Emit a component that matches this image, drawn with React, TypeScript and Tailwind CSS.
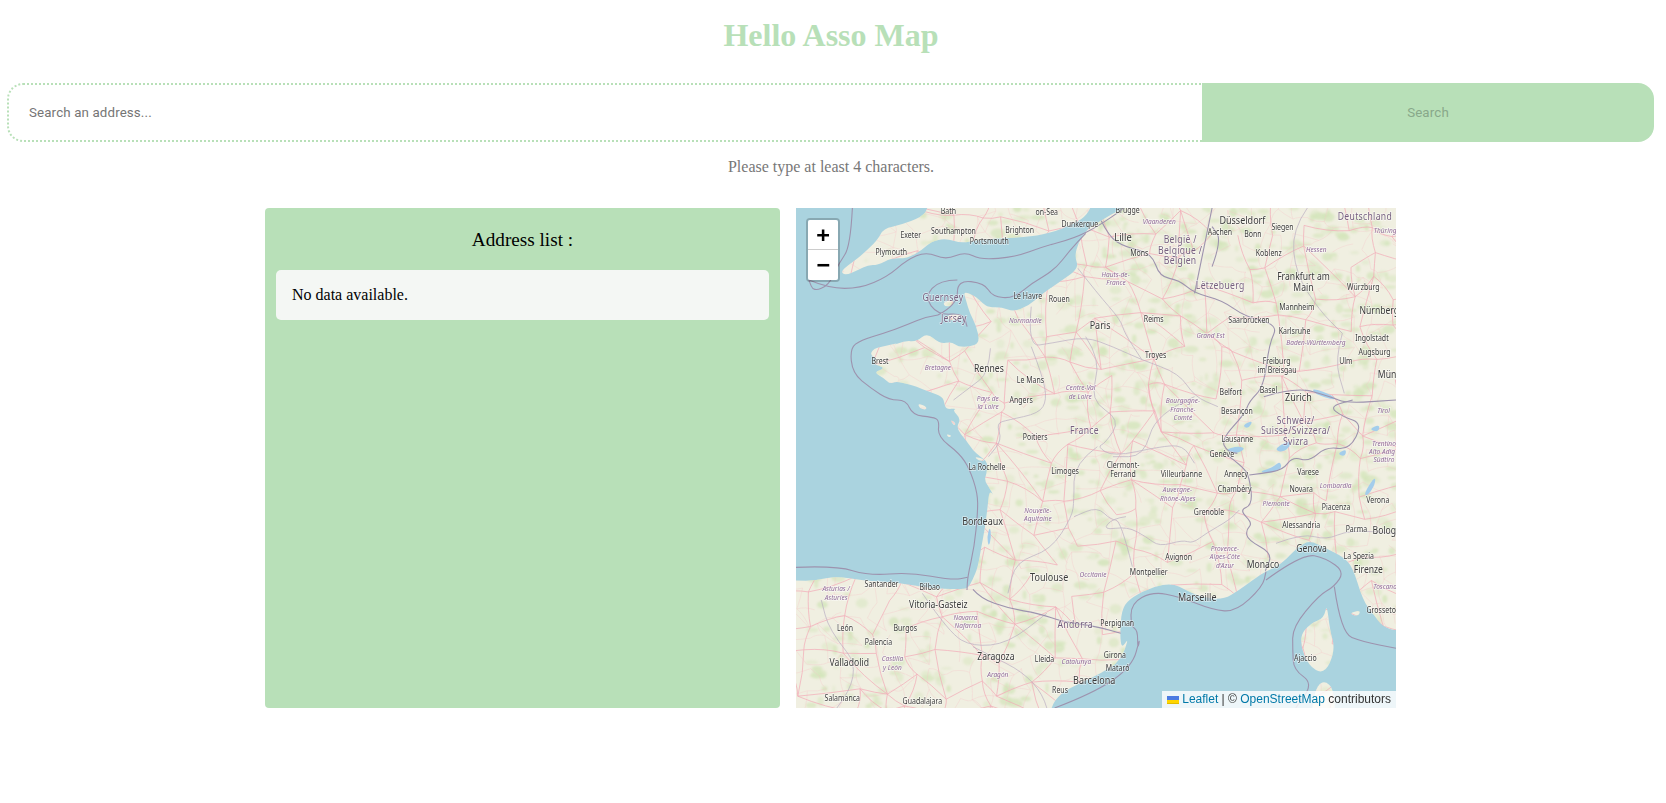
import { useMemo } from "react";

type Pt = [number, number];
type Label = { t: string; x: number; y: number; size?: number };

// labels and northern shapes were read off a zoomed crop of the whole map
const toX = (x: number) => ((x - 15) * 600) / 1543;
const toY = (y: number) => (y - 24) / 3;

// same space, from the two closer crops of the west coast and the riviera
const west = (x: number, y: number): Pt => [(x / 3) * (1543 / 600) + 15, (y / 3 + 132) * 3 + 24];
const east = (x: number, y: number): Pt => [(x / 3 + 300) * (1543 / 600) + 15, (y / 3 + 192) * 3 + 24];
const W = (pts: number[][]) => pts.map(([x, y]) => west(x, y));
const E = (pts: number[][]) => pts.map(([x, y]) => east(x, y));

const line = (pts: Pt[], closed = true) => {
  const p = pts.map(([x, y]) => [toX(x), toY(y)] as Pt);
  const mid = (a: Pt, b: Pt) => `${(a[0] + b[0]) / 2} ${(a[1] + b[1]) / 2}`;
  if (closed) {
    let d = `M${mid(p[p.length - 1], p[0])}`;
    p.forEach((q, i) => {
      d += ` Q${q[0]} ${q[1]} ${mid(q, p[(i + 1) % p.length])}`;
    });
    return `${d} Z`;
  }
  let d = `M${p[0][0]} ${p[0][1]}`;
  for (let i = 1; i < p.length - 1; i++) {
    d += ` Q${p[i][0]} ${p[i][1]} ${mid(p[i], p[i + 1])}`;
  }
  const last = p[p.length - 1];
  return `${d} L${last[0]} ${last[1]}`;
};

const continent: Pt[] = [
  [885, -60], [860, 24], [830, 40], [800, 62], [765, 85], [740, 130], [732, 170], [742, 205], [700, 240], [650, 280],
  [612, 318], [575, 335], [545, 322], [510, 322], [495, 310], [478, 290], [445, 273], [452, 300], [462, 340],
  [478, 375], [488, 428], [462, 440], [432, 440], [415, 425], [385, 432], [352, 398], [325, 425], [295, 422],
  [255, 440],
  ...W([
    [310, 8], [270, 18], [232, 26], [222, 46], [245, 55], [228, 70], [270, 85], [232, 96], [265, 115], [282, 132],
    [300, 124], [335, 132], [360, 140], [400, 155], [440, 170], [445, 190], [450, 208], [482, 205], [470, 212],
    [495, 236], [480, 265], [510, 300], [530, 330], [552, 350], [575, 365], [572, 400], [565, 420], [582, 447],
    [600, 480], [626, 522], [596, 470], [580, 450], [575, 500], [566, 570], [556, 620], [546, 680], [530, 720],
    [515, 745], [490, 748], [400, 745], [300, 727], [200, 722], [120, 708], [60, 722], [0, 722],
  ]),
  [-150, 1135], [-150, 1700], [640, 1700], [668, 1524], [695, 1480], [740, 1452], [800, 1420], [850, 1382], [872, 1310],
  ...E([
    [75, 750], [72, 680], [80, 620], [110, 590], [170, 560], [230, 550], [270, 570], [310, 590], [380, 600],
    [430, 570], [470, 540], [500, 520], [560, 490], [600, 445], [640, 420], [690, 445], [740, 470], [770, 500],
    [800, 600], [830, 640], [860, 680], [900, 692],
  ]),
  [1750, 1320], [1750, -60],
];

const britain: Pt[] = [
  [360, -60], [355, 24], [340, 50], [285, 75], [240, 85], [225, 120], [180, 170], [150, 195], [130, 215], [142, 226],
  [175, 210], [200, 195], [225, 195], [260, 175], [300, 175], [340, 150], [362, 125], [400, 115], [440, 130],
  [480, 120], [540, 115], [620, 110], [680, 95], [705, 82], [750, 60], [775, 24], [790, -60],
];

const corsica: Pt[] = [
  [1380, 1210], [1388, 1290], [1402, 1350], [1374, 1425], [1330, 1395], [1308, 1312], [1338, 1270], [1373, 1255],
];
const sardinia: Pt[] = [[1335, 1640], [1345, 1480], [1370, 1438], [1402, 1470], [1400, 1640]];
const islands: Pt[][] = [
  [[392, 308], [415, 298], [424, 312], [400, 322]],
  [[402, 345], [442, 340], [440, 358], [408, 362]],
  W([[366, 190], [392, 200], [390, 210], [370, 204]]),
  W([[462, 238], [480, 250], [474, 258]]),
  W([[450, 282], [468, 287], [458, 293]]),
  W([[533, 348], [572, 360], [550, 364]]),
  E([[758, 640], [794, 630], [787, 650]]),
];

const borders: Pt[][] = [
  [[160, 24], [155, 140], [125, 190], [100, 255], [60, 275], [48, 240]],
  [[48, 240], [100, 265], [180, 265], [250, 230], [300, 180], [350, 155], [400, 180], [450, 155], [490, 180], [580, 170], [650, 140], [730, 115], [790, 80], [860, 24]],
  [[380, 345], [350, 350], [300, 375], [240, 400],
    ...W([[195, 0], [162, 25], [170, 100], [225, 145], [280, 180], [330, 180], [350, 225], [410, 232], [430, 240], [425, 290], [490, 340], [520, 385], [545, 460], [545, 520], [535, 620], [515, 710], [513, 750]])],
  W([[0, 682], [120, 677], [220, 707], [340, 697], [470, 720], [515, 712]]),
  [[380, 345], [430, 315], [430, 240], [500, 250], [520, 290], [575, 295], [620, 250], [680, 210], [720, 150], [760, 100]],
  [[430, 240], [385, 240], [345, 290], [380, 345], [445, 340], [455, 380]],
  [[800, 62], [820, 110], [860, 140], [930, 160], [950, 230], [1000, 240], [1040, 280], [1110, 300], [1170, 350], [1255, 375], [1232, 430], [1218, 560], [1180, 605], [1170, 640], [1108, 720], [1125, 755], [1150, 760]],
  E([[400, 170], [440, 200], [460, 230], [470, 315], [430, 330], [470, 370], [450, 390], [455, 420], [530, 460], [508, 512]]),
  E([[460, 225], [500, 220], [560, 210], [590, 170], [640, 185], [690, 140], [760, 150], [800, 70], [740, 50], [700, 20], [770, 0]]),
  [[1218, 590], [1300, 560], [1390, 590], [1430, 610], [1558, 600]],
  [[1040, 280], [1085, 24]],
  [[1085, 200], [1110, 120], [1085, 80]],
  [[470, 1168], [490, 1195], [560, 1225], [640, 1240], [700, 1265], [790, 1280], [850, 1300]],
  [[680, 1524], [780, 1480], [880, 1400], [900, 1310], ...E([[125, 750], [125, 690], [105, 680], [105, 610], [170, 575], [250, 590], [350, 630], [420, 635], [500, 560], [510, 515]])],
  [...E([[510, 540], [620, 460], [690, 475], [745, 515], [715, 560], [670, 585], [590, 680], [590, 750]]), [1295, 1410], [1345, 1450], [1300, 1524]],
  E([[715, 560], [735, 700], [800, 725], [900, 745]]),
];

const regions: Pt[][] = [
  [[620, 320], [610, 440], [670, 430], [760, 410], [830, 440], [905, 480], [1000, 520], [1040, 590], [1100, 620]],
  [[740, 205], [790, 280], [850, 360], [860, 400], [905, 480]],
  [[515, 445], [510, 520], [465, 560], [420, 600]],
  [[620, 440], [650, 530], [660, 600], [640, 640], [560, 660], [530, 670], [545, 720], [510, 770]],
  [[760, 410], [800, 480], [770, 600], [850, 660], [810, 730], [790, 740], [830, 770], [950, 740], [1010, 735], [1040, 790]],
  [[790, 740], [730, 790], [730, 900], [725, 950], [670, 1050], [580, 1085], [560, 1180]],
  [[880, 1100], [850, 960], [825, 960], [790, 920], [730, 950]],
  [[1040, 590], [940, 640], [910, 770], [830, 770]],
  E([[90, 350], [50, 355], [20, 390], [95, 380], [150, 410], [190, 440], [260, 420], [290, 430], [330, 400], [400, 360], [430, 330]]),
  [[120, 1524], [190, 1420], [100, 1290], [80, 1200]],
  [[340, 1180], [410, 1300], [470, 1340], [560, 1330], [660, 1240]],
  [[660, 1524], [640, 1440], [470, 1340]],
  [[1330, 24], [1290, 90], [1300, 220], [1360, 330], [1420, 400]],
  [[1420, 400], [1400, 480], [1425, 580]],
  E([[540, 430], [620, 400], [690, 420], [760, 390], [900, 400]]),
];

const cities: Label[] = [
  { t: "Bath", x: 407, y: 34 }, { t: "on-Sea", x: 660, y: 37 }, { t: "Brugge", x: 868, y: 30 },
  { t: "Exeter", x: 310, y: 104 }, { t: "Southampton", x: 420, y: 93 }, { t: "Brighton", x: 590, y: 89 },
  { t: "Portsmouth", x: 512, y: 124 }, { t: "Plymouth", x: 260, y: 157 }, { t: "Dunkerque", x: 745, y: 73 },
  { t: "Lille", x: 856, y: 113, size: 11.5 }, { t: "Mons", x: 898, y: 160 }, { t: "Aachen", x: 1105, y: 96 },
  { t: "Düsseldorf", x: 1163, y: 64, size: 11 }, { t: "Bonn", x: 1190, y: 101 }, { t: "Siegen", x: 1266, y: 81 },
  { t: "Koblenz", x: 1231, y: 160 }, { t: "Frankfurt am", x: 1320, y: 232, size: 10.5 }, { t: "Main", x: 1320, y: 265, size: 10.5 },
  { t: "Würzburg", x: 1474, y: 261 }, { t: "Mannheim", x: 1303, y: 322 }, { t: "Nürnberg", x: 1515, y: 332, size: 10.5 },
  { t: "Le Havre", x: 611, y: 289 }, { t: "Rouen", x: 692, y: 297 }, { t: "Reims", x: 935, y: 356 },
  { t: "Saarbrücken", x: 1180, y: 361 }, { t: "Karlsruhe", x: 1297, y: 393 }, { t: "Ingolstadt", x: 1496, y: 414 },
  { t: "Paris", x: 797, y: 378, size: 11 }, { t: "Brest", x: 231, y: 483 }, { t: "Rennes", x: 511, y: 508, size: 10.5 },
  { t: "Troyes", x: 940, y: 464 }, { t: "Augsburg", x: 1503, y: 455 }, { t: "Freiburg", x: 1251, y: 483 },
  { t: "im Breisgau", x: 1252, y: 509 }, { t: "Ulm", x: 1429, y: 483 }, { t: "Le Mans", x: 618, y: 539 },
  { t: "Mün", x: 1535, y: 525, size: 10.5 }, { t: "Angers", x: 594, y: 601 }, { t: "Belfort", x: 1133, y: 575 },
  { t: "Basel", x: 1230, y: 571 }, { t: "Zürich", x: 1307, y: 593, size: 11 }, { t: "Besançon", x: 1149, y: 633 },
  { t: "Poitiers", x: 630, y: 710 }, { t: "Lausanne", x: 1150, y: 718 }, { t: "Genève", x: 1110, y: 763 },
  { t: "La Rochelle", x: 506, y: 800 }, { t: "Limoges", x: 707, y: 814 }, { t: "Clermont-", x: 856, y: 796 },
  { t: "Ferrand", x: 856, y: 822 }, { t: "Villeurbanne", x: 1006, y: 822 }, { t: "Annecy", x: 1147, y: 822 },
  { t: "Varese", x: 1332, y: 816 }, { t: "Novara", x: 1314, y: 868 }, { t: "Chambéry", x: 1143, y: 868 },
  { t: "Verona", x: 1511, y: 901 }, { t: "Grenoble", x: 1077, y: 936 }, { t: "Piacenza", x: 1404, y: 922 },
  { t: "Alessandria", x: 1314, y: 974 }, { t: "Bordeaux", x: 495, y: 967, size: 11 }, { t: "Parma", x: 1456, y: 988 },
  { t: "Bolog", x: 1528, y: 994, size: 10.5 }, { t: "Genova", x: 1341, y: 1047, size: 10.5 }, { t: "La Spezia", x: 1462, y: 1067 },
  { t: "Avignon", x: 999, y: 1071 }, { t: "Monaco", x: 1216, y: 1095, size: 10.5 }, { t: "Firenze", x: 1487, y: 1111, size: 10.5 },
  { t: "Toulouse", x: 666, y: 1133, size: 11 }, { t: "Montpellier", x: 922, y: 1116 }, { t: "Santander", x: 235, y: 1152 },
  { t: "Bilbao", x: 359, y: 1162 }, { t: "Marseille", x: 1047, y: 1193, size: 11 }, { t: "Vitoria-Gasteiz", x: 381, y: 1214, size: 10.5 },
  { t: "Grosseto", x: 1520, y: 1229 }, { t: "Perpignan", x: 841, y: 1270 }, { t: "León", x: 141, y: 1283 },
  { t: "Burgos", x: 296, y: 1283 }, { t: "Palencia", x: 227, y: 1327 }, { t: "Girona", x: 835, y: 1364 },
  { t: "Zaragoza", x: 529, y: 1370, size: 10.5 }, { t: "Lleida", x: 654, y: 1378 }, { t: "Ajaccio", x: 1325, y: 1375 },
  { t: "Valladolid", x: 152, y: 1390, size: 10.5 }, { t: "Mataró", x: 842, y: 1404 }, { t: "Barcelona", x: 782, y: 1443, size: 11 },
  { t: "Reus", x: 694, y: 1469 }, { t: "Salamanca", x: 134, y: 1495 }, { t: "Guadalajara", x: 340, y: 1504 },
];

const areas: Label[] = [
  { t: "Vlaanderen", x: 949, y: 63 }, { t: "Hessen", x: 1353, y: 148 }, { t: "Thüring", x: 1530, y: 89 },
  { t: "Hauts-de-", x: 837, y: 221 }, { t: "France", x: 838, y: 246 }, { t: "Normandie", x: 605, y: 359 },
  { t: "Grand Est", x: 1081, y: 406 }, { t: "Baden-Württemberg", x: 1352, y: 426 }, { t: "Bretagne", x: 380, y: 500 },
  { t: "Centre-Val", x: 747, y: 561 }, { t: "de Loire", x: 746, y: 587 }, { t: "Pays de", x: 508, y: 593 },
  { t: "la Loire", x: 509, y: 619 }, { t: "Bourgogne-", x: 1010, y: 601 }, { t: "Franche-", x: 1010, y: 626 },
  { t: "Comté", x: 1010, y: 651 }, { t: "Tirol", x: 1526, y: 630 }, { t: "Trentino", x: 1527, y: 728 },
  { t: "Alto Adig", x: 1522, y: 752 }, { t: "Südtiro", x: 1527, y: 778 }, { t: "Lombardia", x: 1403, y: 854 },
  { t: "Auvergne-", x: 996, y: 868 }, { t: "Rhône-Alpes", x: 997, y: 893 }, { t: "Piemonte", x: 1250, y: 908 },
  { t: "Nouvelle-", x: 637, y: 929 }, { t: "Aquitaine", x: 637, y: 955 }, { t: "Provence-", x: 1118, y: 1043 },
  { t: "Alpes-Côte", x: 1118, y: 1069 }, { t: "d'Azur", x: 1118, y: 1095 }, { t: "Occitanie", x: 779, y: 1121 },
  { t: "Toscana", x: 1530, y: 1157 }, { t: "Asturias /", x: 118, y: 1165 }, { t: "Asturies", x: 118, y: 1190 },
  { t: "Navarra", x: 451, y: 1251 }, { t: "Nafarroa", x: 457, y: 1276 }, { t: "Castilla", x: 263, y: 1374 },
  { t: "y León", x: 263, y: 1400 }, { t: "Catalunya", x: 736, y: 1383 }, { t: "Aragón", x: 534, y: 1421 },
];

const countries: Label[] = [
  { t: "Deutschland", x: 1478, y: 50 }, { t: "België /", x: 1003, y: 120 }, { t: "Belgique /", x: 1003, y: 152 },
  { t: "Belgien", x: 1003, y: 184 }, { t: "Lëtzebuerg", x: 1106, y: 259 }, { t: "Guernsey", x: 393, y: 294 },
  { t: "Jersey", x: 421, y: 358 }, { t: "France", x: 757, y: 692 }, { t: "Schweiz/", x: 1300, y: 663 },
  { t: "Suisse/Svizzera/", x: 1300, y: 694 }, { t: "Svizra", x: 1300, y: 727 }, { t: "Andorra", x: 733, y: 1274 },
];

const lakes: Pt[][] = [
  E([[385, 150], [425, 138], [450, 145], [420, 162]]),
  E([[488, 216], [530, 203], [552, 183], [558, 207], [520, 220]]),
  E([[533, 150], [572, 123], [588, 130], [565, 157]]),
  E([[818, 87], [852, 73], [847, 97]]),
  E([[803, 282], [837, 228], [838, 252], [815, 288]]),
  E([[723, 162], [752, 146], [747, 170]]),
  E([[438, 77], [472, 60], [457, 87]]),
  [[1342, 563], [1398, 588], [1402, 602], [1348, 582]],
  W([[573, 590], [582, 558], [586, 592], [578, 622]]),
];

// how green the ground gets, by part of the map (map pixels)
const greenness = (x: number, y: number) => {
  if (x > 440 && y < 300) return 0.95;
  if (x > 280 && y > 170 && y < 340) return 0.75;
  if (x > 250 && y < 110) return 0.8;
  if (x > 190 && x < 240 && y > 320) return 0.9;
  return 0.55;
};

// seeded so the map stays the same between renders
function buildTexture() {
  let seed = 11;
  const rnd = () => {
    seed = (seed * 16807) % 2147483647;
    return seed / 2147483647;
  };

  const patches: { x: number; y: number; rx: number; ry: number; o: number }[] = [];
  for (let i = 0; i < 2000; i++) {
    const x = rnd() * 600;
    const y = rnd() * 500;
    if (rnd() > greenness(x, y)) continue;
    patches.push({ x, y, rx: 1.5 + rnd() * 6, ry: 1 + rnd() * 4, o: 0.3 + rnd() * 0.5 });
  }

  // a jittered grid, joined to its neighbours, reads like a road network
  const mesh = (cell: number, keep: number) => {
    const cols = Math.ceil(600 / cell) + 2;
    const rows = Math.ceil(500 / cell) + 2;
    const nodes: Pt[][] = [];
    for (let r = 0; r < rows; r++) {
      nodes.push([]);
      for (let c = 0; c < cols; c++) {
        nodes[r].push([(c - 0.5) * cell + (rnd() - 0.5) * cell * 0.9, (r - 0.5) * cell + (rnd() - 0.5) * cell * 0.9]);
      }
    }
    const seg = ([x, y]: Pt, [a, b]: Pt) =>
      `M${x.toFixed(1)} ${y.toFixed(1)}Q${((x + a) / 2 + (rnd() - 0.5) * 8).toFixed(1)} ${((y + b) / 2 + (rnd() - 0.5) * 8).toFixed(1)} ${a.toFixed(1)} ${b.toFixed(1)}`;
    let d = "";
    for (let r = 0; r < rows; r++) {
      for (let c = 0; c < cols; c++) {
        if (c + 1 < cols && rnd() < keep) d += seg(nodes[r][c], nodes[r][c + 1]);
        if (r + 1 < rows && rnd() < keep) d += seg(nodes[r][c], nodes[r + 1][c]);
        if (r + 1 < rows && c + 1 < cols && rnd() < keep * 0.25) d += seg(nodes[r][c], nodes[r + 1][c + 1]);
      }
    }
    return d;
  };

  return { patches, main: mesh(33, 0.8), fine: mesh(17, 0.6) };
}

function MapLabels({ items, className, size, spacing }: { items: Label[]; className: string; size: number; spacing?: number }) {
  return (
    <g className={className} textAnchor="middle" style={{ letterSpacing: spacing }}>
      {items.map((l) => (
        // tile lettering runs narrower than Noto Sans at this height
        <text key={l.t + l.x} transform={`translate(${toX(l.x)} ${toY(l.y) + 3}) scale(0.82 1)`} fontSize={l.size ?? size}>
          {l.t}
        </text>
      ))}
    </g>
  );
}

function MapTiles() {
  const { patches, main, fine } = useMemo(buildTexture, []);
  const landPaths = [continent, britain, corsica, sardinia, ...islands].map((p) => line(p));

  return (
    <svg viewBox="0 0 600 500" className="block h-[500px] w-[600px] bg-[#aad3df] blur-[0.35px]">
      <defs>
        <clipPath id="land">
          {landPaths.map((d) => (
            <path key={d} d={d} />
          ))}
        </clipPath>
        <filter id="soft" x="-5%" y="-5%" width="110%" height="110%">
          <feGaussianBlur stdDeviation="1.3" />
        </filter>
      </defs>

      {landPaths.map((d) => (
        <path key={d} d={d} fill="#f0efe1" />
      ))}

      <g clipPath="url(#land)">
        <g filter="url(#soft)">
          {patches.map((g, i) => (
            <ellipse key={i} cx={g.x} cy={g.y} rx={g.rx} ry={g.ry} fill="#d2e4b9" opacity={g.o} />
          ))}
        </g>
        <path d={fine} fill="none" stroke="#f5c6c9" strokeWidth="0.45" opacity="0.75" />
        <path d={main} fill="none" stroke="#f3aab7" strokeWidth="0.75" opacity="0.95" />
      </g>

      {lakes.map((p) => (
        <path key={p[0].join()} d={line(p)} fill="#a3cdeb" />
      ))}

      <g fill="none" stroke="#b9acc2" strokeWidth="0.8" opacity="0.85">
        {regions.map((p) => (
          <path key={p[0].join() + p[1].join()} d={line(p, false)} />
        ))}
      </g>
      <g fill="none" stroke="#9d93ae" strokeWidth="1.1" strokeLinejoin="round">
        {borders.map((p) => (
          <path key={p[0].join() + p[1].join()} d={line(p, false)} />
        ))}
      </g>

      <g className="font-['Noto_Sans','Open_Sans',sans-serif]" paintOrder="stroke" stroke="#ffffff" strokeWidth="1.5" strokeOpacity="0.55">
        <MapLabels items={cities} className="fill-[#3a3a3a]" size={8.5} />
        <MapLabels items={areas} className="fill-[#8f6a98] italic" size={8} />
        <MapLabels items={countries} className="fill-[#76607f]" size={10.5} spacing={0.4} />
      </g>
    </svg>
  );
}

function ZoomControl() {
  return (
    <div className="absolute left-[10px] top-[10px] rounded-[4px] border-2 border-black/20 bg-clip-padding font-['DejaVu_Sans_Mono',monospace] text-[22px] font-bold leading-[30px] text-black">
      <div className="h-[30px] w-[30px] rounded-t-[2px] border-b border-[#cccccc] bg-white text-center">+</div>
      <div className="h-[30px] w-[30px] rounded-b-[2px] bg-white text-center">−</div>
    </div>
  );
}

function Attribution() {
  return (
    <div className="absolute bottom-0 right-0 flex h-[17px] items-center bg-white/80 px-[5px] font-['Liberation_Sans',sans-serif] text-[12px] leading-[17px] text-[#333333]">
      <svg width="12" height="8" viewBox="0 0 12 8" className="mr-[3px]">
        <path fill="#4C7BE1" d="M0 0h12v4H0z" />
        <path fill="#FFD500" d="M0 4h12v3H0z" />
        <path fill="#E0BC00" d="M0 7h12v1H0z" />
      </svg>
      <span className="text-[#0078a8]">Leaflet</span>
      <span className="whitespace-pre"> | © </span>
      <span className="text-[#0078a8]">OpenStreetMap</span>
      <span className="whitespace-pre"> contributors</span>
    </div>
  );
}

export default function App() {
  return (
    <div className="h-[803px] overflow-hidden bg-white pl-2 pr-3 font-['Liberation_Serif',serif]">
      <h1 className="pt-[17px] text-center text-[32px] font-bold leading-[37px] text-[#b8e0b8]">Hello Asso Map</h1>

      {/* Search bar */}
      <div className="mt-[29px] -ml-px flex h-[59px]">
        <div className="flex flex-1 items-center rounded-l-2xl border-2 border-r-0 border-dotted border-[#b8e0b8] pl-[20px] font-['Roboto',sans-serif] text-[13.33px] tracking-[0.13px] text-[#757575]">
          Search an address...
        </div>
        <button disabled className="w-[452px] rounded-r-2xl bg-[#b8e0b8] font-['Roboto',sans-serif] text-[13.33px] tracking-[0.13px] text-[#88a88a]">
          Search
        </button>
      </div>
      <p className="mt-[16px] text-center text-[16px] leading-[18px] text-[#777777]">Please type at least 4 characters.</p>

      {/* Address list + map */}
      <div className="mt-[32px] flex justify-center gap-4 pr-px">
        <div className="h-[500px] w-[515px] rounded-[4px] bg-[#b8e0b8] px-[11px] pt-[21px] text-black">
          <h2 className="text-center text-[19.2px] leading-[22px]">Address list :</h2>
          <div className="mt-[19px] flex h-[50px] items-center rounded-[5px] bg-[#f4f7f4] px-4 text-[16px]">No data available.</div>
        </div>
        <div className="relative h-[500px] w-[600px] overflow-hidden">
          <MapTiles />
          <ZoomControl />
          <Attribution />
        </div>
      </div>
    </div>
  );
}
